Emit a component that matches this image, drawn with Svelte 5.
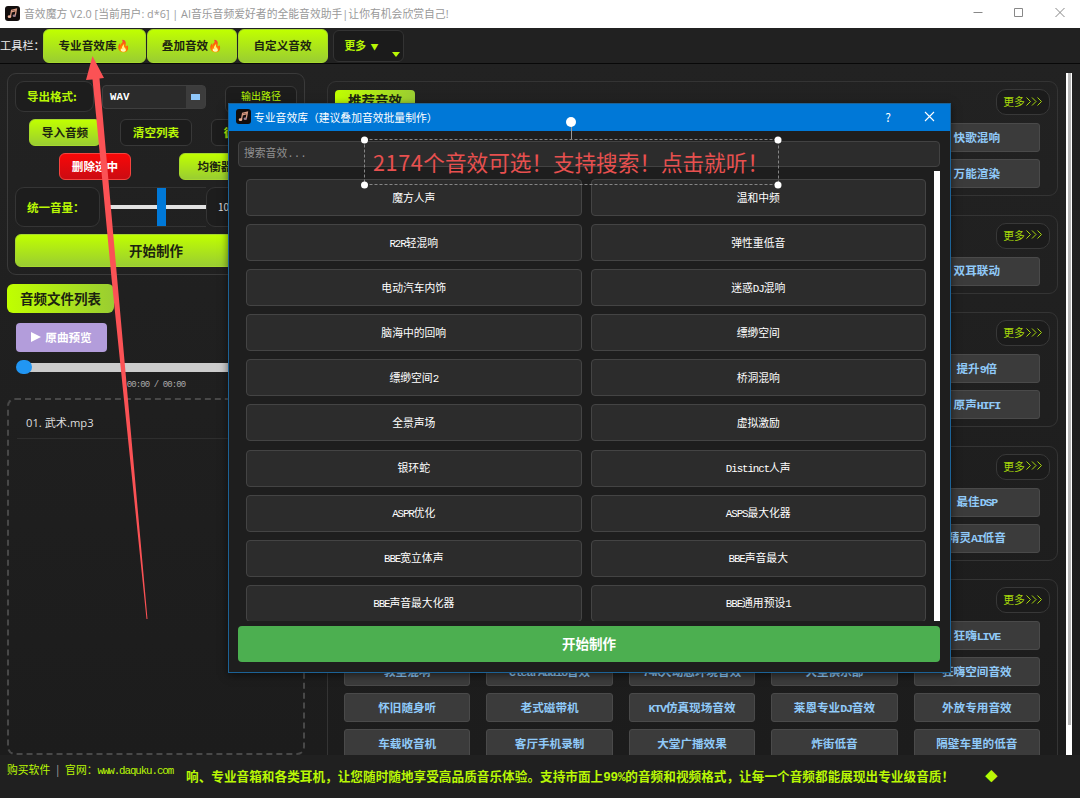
<script>
	const tools = ["专业音效库🔥", "叠加音效🔥", "自定义音效"];

	const groups = [
		{ title: "推荐音效", names: ["", "", "", "", "快歌混响", "", "", "", "", "万能渲染"] },
		{ names: ["", "", "", "", "双耳联动"] },
		{ names: ["", "", "", "", "提升9倍", "", "", "", "", "原声HIFI"] },
		{ names: ["", "", "", "", "最佳DSP", "", "", "", "", "精灵AI低音"] },
		{
			names: [
				"", "", "", "", "狂嗨LIVE",
				"教室混响", "ClearAudio音效", "74K大动态环境音效", "大型俱乐部", "狂嗨空间音效",
				"怀旧随身听", "老式磁带机", "KTV仿真现场音效", "莱恩专业DJ音效", "外放专用音效",
				"车载收音机", "客厅手机录制", "大堂广播效果", "炸街低音", "隔壁车里的低音",
			],
		},
	];

	const library = [
		"魔方人声", "温和中频",
		"R2R轻混响", "弹性重低音",
		"电动汽车内饰", "迷惑DJ混响",
		"脑海中的回响", "缥缈空间",
		"缥缈空间2", "桥洞混响",
		"全景声场", "虚拟激励",
		"银环蛇", "Distinct人声",
		"ASPR优化", "ASPS最大化器",
		"BBE宽立体声", "BBE声音最大",
		"BBE声音最大化器", "BBE通用预设1",
	];

	let search = $state("");

	// latin runs are set half as wide as the chinese characters
	function runs(text) {
		return text.match(/[\x20-\x7e]+|[^\x20-\x7e]+/g) || [];
	}
</script>

{#snippet mixed(text)}
	{#each runs(text) as run}<span class:latin={run.charCodeAt(0) < 127}>{run}</span>{/each}
{/snippet}

{#snippet note()}
	<svg class="note" viewBox="0 0 15 15">
		<rect width="15" height="15" rx="3" fill="#120d0d" />
		<path d="M5.5 10.3 6.6 4.2 11.4 3 10.3 9.4" fill="none" stroke="#d99a82" stroke-width="1.3" />
		<path d="m6.4 5.8 4.7-1.2" stroke="#d99a82" stroke-width="1.4" />
		<ellipse cx="4.5" cy="10.7" rx="1.8" ry="1.4" fill="#f0b49a" />
		<ellipse cx="9.3" cy="9.8" rx="1.7" ry="1.3" fill="#9d8090" />
	</svg>
{/snippet}

<div class="window">
	<header class="titlebar">
		{@render note()}
		<span class="title">音效魔方 V2.0 [当前用户: d*6] | AI音乐音频爱好者的全能音效助手|让你有机会欣赏自己!</span>
		<svg class="controls" width="100" height="28" viewBox="0 0 100 28">
			<path d="M3.5 13.500h9M44.500 9.500h8v8h-8zM85.500 9l9 9m0-9-9 9" fill="none" stroke="#888" />
		</svg>
	</header>

	<nav class="toolbar">
		<span class="label">工具栏：</span>
		{#each tools as tool}
			<button class="lime">{tool}</button>
		{/each}
		<button class="more-menu">更多 <i>▼</i><b></b></button>
	</nav>

	<main>
		<section class="left">
			<div class="panel">
				<div class="row format">
					<span class="box">导出格式:</span>
					<div class="combo"><b class="latin">WAV</b><i></i></div>
					<button class="dark path">输出路径</button>
				</div>
				<div class="row actions">
					<button class="lime">导入音频</button>
					<button class="dark">清空列表</button>
					<button class="dark">循环播放</button>
				</div>
				<div class="row second">
					<button class="red">删除选中</button>
					<button class="lime">均衡器</button>
				</div>
				<div class="row volume">
					<span class="box">统一音量：</span>
					<div class="slider"><i></i></div>
					<span class="box value">100%</span>
				</div>
				<button class="lime start">开始制作</button>
			</div>
			<h2>音频文件列表</h2>
			<button class="preview">
				<svg width="10" height="10" viewBox="0 0 10 10"><path d="M0 0 10 5 0 10z" fill="#fff" /></svg>
				原曲预览
			</button>
			<div class="seek"><i></i></div>
			<div class="time latin">00:00 / 00:00</div>
			<div class="files">
				<div class="file">01. 武术.mp3</div>
			</div>
		</section>

		<section class="right">
			<div class="groups">
				{#each groups as group}
					<div class="group">
						<div class="head">
							{#if group.title}<h3>{group.title}</h3>{/if}
							<button class="more">更多<svg width="17" height="9" viewBox="0 0 17 9"><path d="m.5.5 4 4-4 4M6 .5l4 4-4 4M11.500.5l4 4-4 4" fill="none" stroke="#a6d80a" /></svg></button>
						</div>
						<div class="grid">
							{#each group.names as name}
								<button class="effect">{@render mixed(name)}</button>
							{/each}
						</div>
					</div>
				{/each}
			</div>
			<div class="scrollbar"><i></i></div>
		</section>
	</main>

	<footer>
		<div class="links">
			<span>购买软件</span><em>|</em><span>官网：</span><span class="latin">www.daquku.com</span>
		</div>
		<div class="marquee">
			<p>{@render mixed("响、专业音箱和各类耳机，让您随时随地享受高品质音乐体验。支持市面上99%的音频和视频格式，让每一个音频都能展现出专业级音质！")}</p>
			<i>◆</i>
		</div>
	</footer>

	<div class="dialog">
		<div class="caption">
			{@render note()}
			<span>专业音效库（建议叠加音效批量制作）</span>
			<b>?</b>
			<svg width="11" height="11" viewBox="0 0 11 11"><path d="m1 1 9 9m0-9-9 9" stroke="#fff" stroke-width="1.100" /></svg>
		</div>
		<div class="body">
			<input placeholder="搜索音效..." bind:value={search} />
			<div class="list">
				<div class="items">
					{#each library.filter((x) => x.includes(search)) as name}
						<button class="item">{@render mixed(name)}</button>
					{/each}
				</div>
				<div class="bar"></div>
			</div>
			<button class="make">开始制作</button>
		</div>
	</div>

	<div class="callout"><span><b>2174</b>个音效可选！支持搜索！点击就听！</span></div>
	<svg class="marks" width="1080" height="798" viewBox="0 0 1080 798">
		<path d="M571.500 122v18" stroke="#999" />
		<rect x="364.500" y="139.500" width="414" height="45" fill="none" stroke="#858585" stroke-dasharray="3 2" />
		<g fill="#fff">
			<circle cx="571" cy="122" r="5" />
			<circle cx="364.500" cy="140" r="3.500" />
			<circle cx="778" cy="140" r="3.500" />
			<circle cx="364.500" cy="185" r="3.500" />
			<circle cx="778" cy="185" r="3.500" />
		</g>
		<path d="M92.500 56 104 78l-4.500.500L104 130l13.300 150L128 400l19.500 219h-1L124 400 111.700 280 97.500 130 92.500 79.500l-6.500.500z" fill="#fb5255" />
	</svg>
</div>

<style>
	:global(body) {
		background: #1e1e1e;
	}
	.window {
		position: relative;
		width: 1080px;
		height: 798px;
		overflow: hidden;
		display: flex;
		flex-direction: column;
		background: #1f1f1f;
		color: #eee;
		font: 10.8px "Noto Sans CJK SC", sans-serif;
	}
	.window * {
		box-sizing: border-box;
	}
	button {
		font: inherit;
		color: inherit;
		padding: 0 0 2px;
		margin: 0;
		white-space: nowrap;
	}
	i, em {
		font-style: normal;
	}
	.latin {
		font-family: "Liberation Mono", monospace;
		letter-spacing: -0.1em;
	}
	.note {
		width: 15px;
		height: 15px;
		flex: none;
	}

	.titlebar {
		height: 28px;
		flex: none;
		display: flex;
		align-items: center;
		padding: 0 10px 2px 5px;
		background: #fff;
		color: #999;
	}
	.title {
		margin-left: 4px;
		flex: 1;
		font-family: "Open Sans", "Noto Sans CJK SC", sans-serif;
		letter-spacing: 0.02px;
		white-space: nowrap;
	}

	.toolbar {
		height: 36px;
		flex: none;
		display: flex;
		padding: 1px 0;
		border-bottom: 1px solid #080808;
		background: #212121;
	}
	.toolbar .label {
		width: 43px;
		line-height: 33px;
		font-size: 11.2px;
		white-space: nowrap;
	}
	.lime {
		border: 1px solid #a6d82e;
		border-radius: 6px;
		background: linear-gradient(#c0ff00, #9acd32);
		color: #1c2410;
		font-weight: bold;
		font-size: 11.6px;
	}
	.toolbar .lime {
		width: 103px;
		height: 34px;
		margin-right: 1px;
	}
	.toolbar .lime + .lime {
		width: 90px;
		margin-right: 0.5px;
	}
	.more-menu {
		position: relative;
		width: 71px;
		height: 32px;
		margin: 1px 0 0 5px;
		padding-right: 14px;
		border: 1px solid #333;
		border-radius: 6px;
		background: #1b1b1b;
		color: #b9f705;
		font-weight: bold;
	}
	.more-menu i {
		margin-left: 2px;
		font-size: 8px;
	}
	.more-menu b {
		position: absolute;
		right: 3px;
		bottom: 4px;
		border: 4px solid transparent;
		border-top: 5px solid #b9f705;
		border-bottom: 0;
	}

	main {
		height: 691px;
		flex: none;
		display: flex;
		overflow: hidden;
		background: linear-gradient(#222, #1c1c1c);
	}
	.left {
		width: 327px;
		flex: none;
		padding: 9px 22px 0 7px;
	}
	.panel {
		height: 202px;
		padding: 7px;
		border: 1px solid #3a3a3a;
		border-radius: 9px;
	}
	.row {
		display: flex;
	}
	.box {
		border: 1px solid #353535;
		border-radius: 9px;
		background: #1d1d1d;
		color: #b9f705;
		font-weight: bold;
		font-size: 11.5px;
		padding-left: 11px;
		white-space: nowrap;
	}
	.format {
		height: 38px;
	}
	.format .box {
		width: 79px;
		height: 31px;
		line-height: 29px;
	}
	.combo {
		width: 104px;
		height: 24px;
		margin: 4px 19px 0 8px;
		display: flex;
		justify-content: space-between;
		align-items: center;
		padding-left: 7px;
		border: 1px solid #3f3f3f;
		border-radius: 4px;
		background: #2b2b2b;
		color: #fff;
	}
	.combo b {
		letter-spacing: 0;
	}
	.combo i {
		width: 19px;
		height: 22px;
		border: solid #3c3c3c;
		border-width: 8px 5px;
		background: #90c8fa;
	}
	.dark {
		border: 1px solid #383838;
		border-radius: 6px;
		background: #1c1c1c;
		color: #b9f705;
		font-weight: bold;
		font-size: 11.6px;
	}
	.dark.path {
		width: 72px;
		height: 27px;
		margin-top: 5px;
		padding-bottom: 9px;
		font-weight: normal;
		font-size: 10px;
	}
	.actions, .second {
		height: 34px;
		gap: 19px;
		padding-left: 14px;
	}
	.actions button, .second button {
		width: 72px;
		height: 27px;
	}
	.second {
		gap: 48px;
		padding-left: 44px;
	}
	.red {
		border: 1px solid #f5443f;
		border-radius: 6px;
		background: linear-gradient(#f80808, #cc0b12);
		color: #fff;
		font-weight: bold;
		font-size: 11.6px;
	}
	.volume .box {
		width: 85px;
		height: 40px;
		line-height: 38px;
	}
	.slider {
		width: 96px;
		margin-left: 10px;
		height: 40px;
		display: flex;
		justify-content: center;
		align-items: center;
		border: solid #333;
		border-width: 1px 0;
		background: linear-gradient(#e2e2e2, #e2e2e2) 0 17px / 100% 4px no-repeat;
	}
	.slider i {
		width: 9px;
		height: 38px;
		margin-left: 7px;
		background: #0078d7;
	}
	.volume .value {
		font-weight: normal;
		color: #ddd;
		font-size: 10px;
	}
	.start {
		width: 100%;
		height: 33px;
		margin-top: 7px;
		font-size: 13.5px;
	}
	h2, h3 {
		margin: 0;
		color: #1c2410;
		background: linear-gradient(90deg, #c0ff00, #9acd32);
	}
	h2 {
		width: 107px;
		height: 29px;
		margin-top: 9px;
		line-height: 28px;
		border-radius: 6px;
		text-align: center;
		font-size: 13.5px;
	}
	.preview {
		display: flex;
		align-items: center;
		justify-content: center;
		gap: 4px;
		width: 91px;
		height: 29px;
		margin: 10px 0 0 9px;
		border: 0;
		border-radius: 4px;
		background: #b39ddb;
		color: #fff;
		font-weight: bold;
		font-size: 11.6px;
	}
	.seek {
		height: 15px;
		margin: 8px 7px 0 9px;
		background: linear-gradient(#ccc, #ccc) 8px 3px / 100% 9px no-repeat;
	}
	.seek i {
		display: block;
		width: 16px;
		height: 14px;
		border-radius: 7px;
		background: #2196f3;
	}
	.time {
		margin-top: 4px;
		height: 13px;
		line-height: 13px;
		text-align: center;
		font-size: 9px;
		color: #aaa;
	}
	.files {
		height: 357px;
		margin-top: 6px;
		border: 2px dashed #484848;
		border-radius: 8px;
	}
	.file {
		margin: 6px 8px;
		padding-left: 9px;
		height: 33px;
		line-height: 33px;
		border-bottom: 1px solid #2e2e2e;
		font-family: "Open Sans", "Noto Sans CJK SC", sans-serif;
		font-size: 11.2px;
		color: #ddd;
	}

	.right {
		flex: 1;
		display: flex;
		padding-top: 9px;
	}
	.groups {
		width: 731px;
		display: flex;
		flex-direction: column;
		gap: 18.5px;
		padding-top: 8px;
	}
	.group {
		flex: none;
		padding: 7px 17px 7px 16px;
		border: 1px solid #343434;
		border-radius: 9px;
	}
	.head {
		display: flex;
		height: 34px;
		margin: 0 -10px 0 -9px;
	}
	h3 {
		width: 80px;
		height: 27px;
		margin-top: 1px;
		border-radius: 4px;
		line-height: 21px;
		text-align: center;
		font-size: 13.5px;
	}
	.more {
		display: flex;
		align-items: center;
		justify-content: center;
		gap: 1px;
		width: 54px;
		height: 26px;
		margin-left: auto;
		border: 1px solid #383838;
		border-radius: 10px;
		background: #1b1b1b;
		color: #a6d80a;
	}
	.grid {
		display: grid;
		grid-template-columns: repeat(5, 1fr);
		gap: 7px 16px;
	}
	.effect {
		height: 29px;
		border: 1px solid #4a4a4a;
		border-radius: 3px;
		background: #3b3b3b;
		color: #90caf9;
		font-weight: bold;
		font-size: 11.6px;
	}
	.scrollbar {
		width: 6px;
		margin-left: 8px;
		background: #fff;
	}
	.scrollbar i {
		display: block;
		width: 3px;
		height: 652px;
		margin-left: 2px;
		background: #b8b8b8;
	}

	footer {
		flex: 1;
		display: flex;
		background: #202020;
		color: #b9f705;
		white-space: nowrap;
	}
	.links {
		width: 184px;
		padding: 6px 0 0 7px;
	}
	.links em {
		margin: 0 6px;
		color: #aaa;
	}
	.marquee {
		flex: 1;
		display: flex;
		padding-top: 11px;
		overflow: hidden;
		font-weight: bold;
		font-size: 12.6px;
		letter-spacing: 0.05px;
	}
	.marquee p {
		margin: 0 31px 0 2px;
	}
	.marquee .latin {
		letter-spacing: -0.2px;
	}

	.dialog {
		position: absolute;
		left: 228px;
		top: 103px;
		width: 723px;
		height: 570px;
		border: 1px solid #1c6296;
		background: #1e1e1e;
		box-shadow: 0 2px 8px #0008;
	}
	.caption {
		height: 27px;
		display: flex;
		align-items: center;
		padding: 0 15px 2px 7px;
		background: #0078d7;
		color: #fff;
	}
	.caption span {
		margin-left: 3px;
		flex: 1;
	}
	.caption b {
		font-weight: normal;
		font-size: 12px;
		margin-right: 33px;
	}
	.body {
		padding: 10px 10px 0 9px;
	}
	input {
		display: block;
		width: 100%;
		height: 26px;
		padding: 0 5px 1px;
		border: 1px solid #424242;
		border-radius: 4px;
		background: #2c2c2c;
		color: #ddd;
		font: inherit;
		font-family: "Liberation Mono", "Noto Sans CJK SC", monospace;
	}
	input::placeholder {
		color: #909090;
	}
	.list {
		display: flex;
		height: 450px;
		margin-top: 4px;
		overflow: hidden;
	}
	.items {
		width: 697px;
		display: grid;
		grid-template-columns: 1fr 1fr;
		grid-auto-rows: 37px;
		gap: 8.1px 9px;
		padding: 8px 8px 0;
	}
	.item {
		border: 1px solid #444;
		border-radius: 4px;
		background: #2c2c2c;
		color: #fff;
	}
	.bar {
		width: 6px;
		background: #fff;
	}
	.make {
		display: block;
		width: 100%;
		height: 36px;
		margin-top: 5px;
		border: 0;
		border-radius: 4px;
		background: #4caf50;
		color: #fff;
		font-weight: bold;
		font-size: 13.5px;
	}

	.callout {
		position: absolute;
		left: 364px;
		top: 139px;
		width: 415px;
		height: 46px;
		padding-left: 9px;
		line-height: 45px;
		font-size: 21.6px;
		color: #e8504f;
		white-space: nowrap;
	}
	.callout b {
		font-weight: normal;
		letter-spacing: 0.6px;
	}
	.marks {
		position: absolute;
		left: 0;
		top: 0;
		pointer-events: none;
	}
</style>
